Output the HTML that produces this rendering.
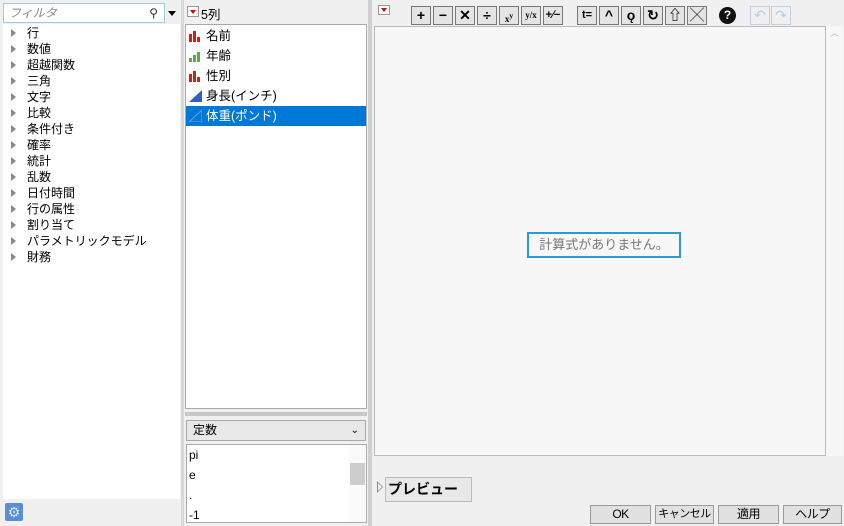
<!DOCTYPE html><html><head><meta charset="utf-8"><style>
*{box-sizing:border-box;margin:0;padding:0}
html,body{width:844px;height:526px;overflow:hidden}
body{background:#f0f0f0;font-family:"Liberation Sans","Noto Sans CJK JP",sans-serif;font-size:12px;position:relative;color:#000}
.a{position:absolute}
.tree div{height:16px;line-height:16px;padding-left:24px;position:relative}
.tree div:before{content:"";position:absolute;left:8px;top:4px;border-left:5px solid #888;border-top:4px solid transparent;border-bottom:4px solid transparent}
.col div{height:20px;line-height:20px;padding-left:20px;position:relative;font-size:12.5px}
.tb{position:absolute;top:6px;width:20px;height:19px;border:1px solid #777;background:#e4e4e4;font-weight:bold;text-align:center;line-height:17px;font-size:14px;white-space:nowrap;overflow:hidden}
.btn{position:absolute;top:505px;height:19px;border:1px solid #999;background:#e1e1e1;text-align:center;line-height:17px;font-size:12px;white-space:nowrap;overflow:hidden;letter-spacing:-0.5px}
</style></head><body>
<div class="a" style="left:3px;top:3px;width:162px;height:20px;background:#fff;border:1px solid #9ccbe8;color:#888;font-style:italic;padding-left:5px;line-height:18px">フィルタ<span style="position:absolute;right:6px;font-style:normal;color:#333">⚲</span></div>
<div class="a" style="left:168px;top:11px;border-top:5px solid #000;border-left:4px solid transparent;border-right:4px solid transparent"></div>
<div class="a tree" style="left:3px;top:24px;width:177px;height:475px;background:#fff;padding-top:1px">
<div>行</div><div>数値</div><div>超越関数</div><div>三角</div><div>文字</div><div>比較</div><div>条件付き</div><div>確率</div><div>統計</div><div>乱数</div><div>日付時間</div><div>行の属性</div><div>割り当て</div><div>パラメトリックモデル</div><div>財務</div></div>
<div class="a" style="left:5px;top:503px;width:18px;height:18px;background:#5b8ed6;border-radius:2px;color:#dfe9f8;text-align:center;line-height:18px;font-size:14px">⚙</div>
<div class="a" style="left:181px;top:0;width:3px;height:526px;background:#d8d8d8"></div>
<div class="a" style="left:187px;top:6px;width:12px;height:11px;border:1px solid #999;background:#fff"><div class="a" style="left:2px;top:3px;border-top:4px solid #d00;border-left:3px solid transparent;border-right:3px solid transparent"></div></div>
<div class="a" style="left:201px;top:4px;font-size:12.5px">5列</div>
<div class="a col" style="left:185px;top:24px;width:182px;height:385px;background:#fff;border:1px solid #aaa;padding-top:1px">
<div><svg class="a" style="left:3px;top:5px" width="12" height="11"><rect x="0" y="3" width="3" height="8" fill="#d02010"/><rect x="4" y="0" width="3" height="11" fill="#d02010"/><rect x="8" y="6" width="3" height="5" fill="#d02010"/></svg>名前</div>
<div><svg class="a" style="left:3px;top:5px" width="12" height="11"><rect x="0" y="7" width="3" height="4" fill="#5aaa46"/><rect x="4" y="4" width="3" height="7" fill="#5aaa46"/><rect x="8" y="1" width="3" height="10" fill="#5aaa46"/></svg>年齢</div>
<div><svg class="a" style="left:3px;top:5px" width="12" height="11"><rect x="0" y="3" width="3" height="8" fill="#d02010"/><rect x="4" y="0" width="3" height="11" fill="#d02010"/><rect x="8" y="6" width="3" height="5" fill="#d02010"/></svg>性別</div>
<div><svg class="a" style="left:3px;top:4px" width="13" height="12"><polygon points="0,12 13,0 13,12" fill="#3060c0"/></svg>身長(インチ)</div>
<div style="background:#0078d7;color:#fff"><svg class="a" style="left:3px;top:4px" width="13" height="12"><polygon points="0,12 13,0 13,12" fill="none" stroke="#7d9bd0"/></svg>体重(ポンド)</div></div>
<div class="a" style="left:185px;top:412px;width:182px;height:4px;background:#c8c8c8"></div>
<div class="a" style="left:186px;top:420px;width:180px;height:21px;border:1px solid #aaa;background:#e8e8e8;padding-left:6px;line-height:19px">定数<span style="position:absolute;right:6px;font-size:10px">⌄</span></div>
<div class="a" style="left:186px;top:444px;width:181px;height:79px;background:#fff;border:1px solid #aaa;line-height:20px;padding-left:2px">pi<br>e<br>.<br>-1
<div class="a" style="right:0;top:0;width:17px;height:77px;background:#fafafa"><div class="a" style="left:1px;top:18px;width:15px;height:22px;background:#cdcdcd"></div></div></div>
<div class="a" style="left:368px;top:0;width:4px;height:526px;background:#d0d0d0"></div>
<div class="a" style="left:378px;top:5px;width:12px;height:10px;border:1px solid #999;background:#fff"><div class="a" style="left:2px;top:2px;border-top:4px solid #d00;border-left:3px solid transparent;border-right:3px solid transparent"></div></div>
<div class="tb" style="left:411px">+</div><div class="tb" style="left:433px">−</div><div class="tb" style="left:455px">✕</div><div class="tb" style="left:477px">÷</div><div class="tb" style="left:499px;font-size:9px;font-family:'Liberation Serif'">x<sup>y</sup></div><div class="tb" style="left:521px;font-size:9px;font-family:'Liberation Serif'">y/x</div><div class="tb" style="left:543px;font-size:11px">+∕−</div>
<div class="tb" style="left:577px;font-size:11px">t=</div><div class="tb" style="left:599px">^</div><div class="tb" style="left:621px">ǫ</div><div class="tb" style="left:643px">↻</div><div class="tb" style="left:665px">⇧</div><div class="tb" style="left:687px;font-weight:normal">╳</div>
<div class="a" style="left:719px;top:7px;width:17px;height:17px;border-radius:50%;background:#111;color:#fff;font-weight:bold;text-align:center;line-height:17px;font-size:12px">?</div>
<div class="tb" style="left:750px;border-color:#c0d0e0;background:#f0f0f0;color:#b8cce0;font-weight:normal">↶</div><div class="tb" style="left:771px;border-color:#c0d0e0;background:#f0f0f0;color:#b8cce0;font-weight:normal">↷</div>
<div class="a" style="left:374px;top:26px;width:452px;height:430px;background:#f7f7f7;border:1px solid #bbb"></div>
<div class="a" style="left:527px;top:232px;width:154px;height:26px;border:2px solid #2a9ad8;color:#777;text-align:center;line-height:22px;font-size:13px;background:#f7f7f7;white-space:nowrap">計算式がありません。</div>
<div class="a" style="left:826px;top:26px;width:17px;height:430px;background:#f7f7f7;color:#bbb;font-size:9px;text-align:center">︿</div>
<div class="a" style="left:374px;top:457px;width:452px;height:16px;background:#f0f0f0"></div>
<div class="a" style="left:377px;top:481px;border-left:6px solid #888;border-top:6px solid transparent;border-bottom:6px solid transparent"></div>
<div class="a" style="left:378px;top:483px;border-left:4px solid #f0f0f0;border-top:4px solid transparent;border-bottom:4px solid transparent"></div>
<div class="a" style="left:385px;top:477px;width:87px;height:25px;border:1px solid #bbb;background:#e8e8e8;font-weight:bold;font-size:14px;line-height:23px;padding-left:2px;white-space:nowrap">プレビュー</div>
<div class="btn" style="left:590px;width:61px">OK</div><div class="btn" style="left:655px;width:59px;font-size:11px">キャンセル</div><div class="btn" style="left:718px;width:61px">適用</div><div class="btn" style="left:783px;width:59px">ヘルプ</div>
</body></html>
